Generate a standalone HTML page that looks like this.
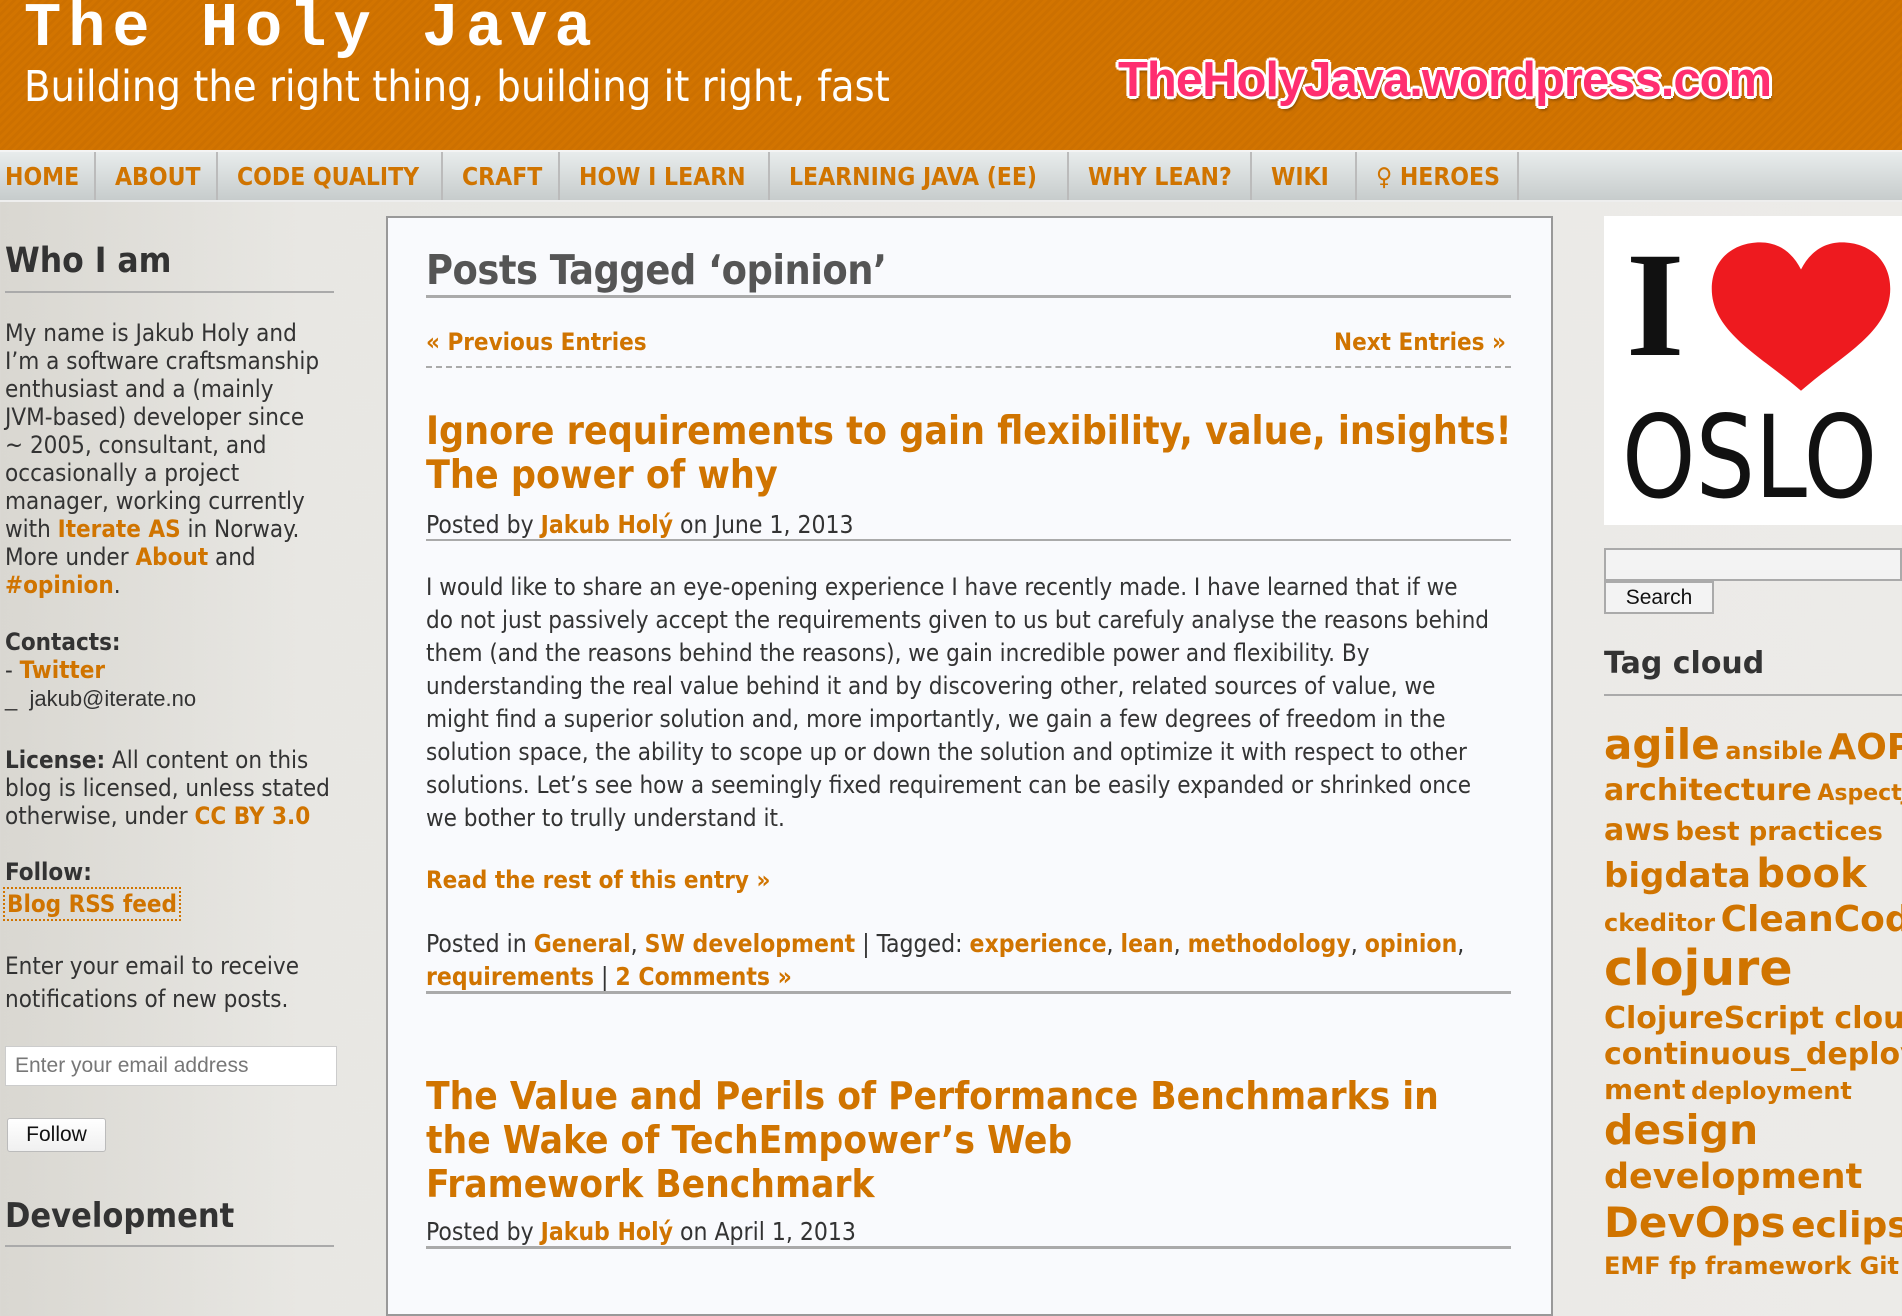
<!DOCTYPE html>
<html><head><meta charset="utf-8"><style>
*{margin:0;padding:0;box-sizing:border-box}
body{width:1902px;height:1270px;overflow:hidden;position:relative;background:linear-gradient(90deg,#d9d7d1 0,#e8e7e3 300px,#ecebe8 100%);font-family:"DejaVu Sans Condensed","DejaVu Sans",sans-serif;color:#333}
.a{position:absolute;white-space:nowrap}
.o{color:#d07400;font-weight:bold}
#hdr{position:absolute;left:0;top:0;width:1902px;height:150px;background:repeating-linear-gradient(135deg,#d27400 0,#d27400 3px,#cc7000 3px,#cc7000 6px)}
#nav{position:absolute;left:0;top:150px;width:1902px;height:52px;background:linear-gradient(#e8ecec,#d4d9d9 60%,#c7cccc);border-top:2px solid #f4f4f4;border-bottom:2px solid #eee}
#nav div{position:absolute;top:0;height:48px;line-height:50px;font-weight:bold;font-size:24.5px;color:#d07400;border-right:2px solid #bbb;text-align:left;padding-left:19px}
#main{position:absolute;left:386px;top:216px;width:1167px;height:1100px;background:#f9fafd;border:2px solid #999}
.t{font-size:24.5px;line-height:33px}
.hr{position:absolute;height:3px;background:#aaa}
.s{font-size:24px;line-height:28px}
</style></head><body>
<div id="hdr"></div>
<div class="a" style="left:24px;top:-6px;font-family:'Liberation Mono',monospace;font-weight:bold;font-size:62px;letter-spacing:7px;color:#fff;line-height:70px">The Holy Java</div>
<div class="a" style="left:24px;top:62px;font-size:43px;color:#fff;line-height:50px">Building the right thing, building it right, fast</div>
<div class="a" style="left:1118px;top:50px;font-family:'Liberation Sans',sans-serif;font-weight:bold;font-size:49px;letter-spacing:-1px;color:#ff2e70;line-height:60px;text-shadow:0 0 2px #fff,2px 2px 0 #fff,-2px -2px 0 #fff,2px -2px 0 #fff,-2px 2px 0 #fff,0 3px 0 #fff,0 -3px 0 #fff,3px 0 0 #fff,-3px 0 0 #fff,2px 4px 3px rgba(0,0,0,.4)">TheHolyJava.wordpress.com</div>
<div id="nav">
<div style="left:0;width:96px;padding-left:5px">HOME</div>
<div style="left:96px;width:122px">ABOUT</div>
<div style="left:218px;width:225px">CODE QUALITY</div>
<div style="left:443px;width:117px">CRAFT</div>
<div style="left:560px;width:210px">HOW I LEARN</div>
<div style="left:770px;width:299px">LEARNING JAVA (EE)</div>
<div style="left:1069px;width:183px">WHY LEAN?</div>
<div style="left:1252px;width:105px">WIKI</div>
<div style="left:1357px;width:162px">♀ HEROES</div>
</div>

<!-- left sidebar -->
<div class="a" style="left:5px;top:241px;font-size:35px;font-weight:bold;color:#333">Who I am</div>
<div class="hr" style="left:5px;top:291px;width:329px;height:2px"></div>
<div class="a s" style="left:5px;top:319px">My name is Jakub Holy and<br>I’m a software craftsmanship<br>enthusiast and a (mainly<br>JVM-based) developer since<br>~ 2005, consultant, and<br>occasionally a project<br>manager, working currently<br>with <span class="o">Iterate AS</span> in Norway.<br>More under <span class="o">About</span> and<br><span class="o">#opinion</span>.</div>
<div class="a s" style="left:5px;top:628px"><b>Contacts:</b><br>- <span class="o">Twitter</span><br><span style="font-family:'Liberation Sans',sans-serif;font-size:22px">_&nbsp; jakub@iterate.no</span></div>
<div class="a s" style="left:5px;top:746px"><b>License:</b> All content on this<br>blog is licensed, unless stated<br>otherwise, under <span class="o">CC BY 3.0</span></div>
<div class="a s" style="left:5px;top:858px"><b>Follow:</b></div>
<div class="a" style="left:3px;top:887px;font-size:24px;line-height:30px;border:2px dotted #d07400;padding:0 2px" ><span class="o">Blog RSS feed</span></div>
<div class="a" style="left:5px;top:950px;font-size:24px;line-height:33px">Enter your email to receive<br>notifications of new posts.</div>
<div class="a" style="left:5px;top:1046px;width:332px;height:40px;background:#fff;border:1px solid #ccc;font-family:'Liberation Sans',sans-serif;font-size:21px;color:#777;line-height:38px;padding-left:9px">Enter your email address</div>
<div class="a" style="left:7px;top:1118px;width:99px;height:34px;background:linear-gradient(#fff,#f0f0f0);border:1px solid #bbb;border-radius:3px;font-family:'Liberation Sans',sans-serif;font-size:21px;color:#111;line-height:32px;text-align:center">Follow</div>
<div class="a" style="left:5px;top:1196px;font-size:34px;font-weight:bold;color:#333">Development</div>
<div class="hr" style="left:5px;top:1245px;width:329px;height:2px"></div>

<!-- main -->
<div id="main"></div>
<div class="a" style="left:426px;top:245px;font-size:41px;font-weight:bold;color:#555;line-height:50px;letter-spacing:-0.5px">Posts Tagged ‘opinion’</div>
<div class="hr" style="left:426px;top:295px;width:1085px"></div>
<div class="a o" style="left:426px;top:327px;font-size:24px;line-height:30px">« Previous Entries</div>
<div class="a o" style="left:1334px;top:327px;font-size:24px;line-height:30px">Next Entries »</div>
<div class="a" style="left:426px;top:366px;width:1085px;border-top:2px dashed #aaa"></div>
<div class="a o" style="left:426px;top:410px;font-size:39px;line-height:44px">Ignore requirements to gain flexibility, value, insights!<br>The power of why</div>
<div class="a t" style="left:426px;top:508px">Posted by <span class="o">Jakub Holý</span> on June 1, 2013</div>
<div class="hr" style="left:426px;top:539px;width:1085px;height:2px"></div>
<div class="a" style="left:426px;top:571px;font-size:24px;line-height:33px">I would like to share an eye-opening experience I have recently made. I have learned that if we<br>do not just passively accept the requirements given to us but carefuly analyse the reasons behind<br>them (and the reasons behind the reasons), we gain incredible power and flexibility. By<br>understanding the real value behind it and by discovering other, related sources of value, we<br>might find a superior solution and, more importantly, we gain a few degrees of freedom in the<br>solution space, the ability to scope up or down the solution and optimize it with respect to other<br>solutions. Let’s see how a seemingly fixed requirement can be easily expanded or shrinked once<br>we bother to trully understand it.</div>
<div class="a o" style="left:426px;top:864px;font-size:24px;line-height:33px">Read the rest of this entry »</div>
<div class="a t" style="left:426px;top:927px">Posted in <span class="o">General</span>, <span class="o">SW development</span> | Tagged: <span class="o">experience</span>, <span class="o">lean</span>, <span class="o">methodology</span>, <span class="o">opinion</span>,<br><span class="o">requirements</span> | <span class="o">2 Comments »</span></div>
<div class="hr" style="left:426px;top:991px;width:1085px"></div>
<div class="a o" style="left:426px;top:1075px;font-size:38.5px;line-height:44px">The Value and Perils of Performance Benchmarks in<br>the Wake of TechEmpower’s Web<br>Framework Benchmark</div>
<div class="a t" style="left:426px;top:1215px">Posted by <span class="o">Jakub Holý</span> on April 1, 2013</div>
<div class="hr" style="left:426px;top:1246px;width:1085px"></div>

<!-- right sidebar -->
<div class="a" style="left:1604px;top:216px;width:298px;height:309px;background:#fff;overflow:hidden">
<div class="a" style="left:22px;top:14px;font-family:'Liberation Serif',serif;font-weight:bold;font-size:150px;line-height:150px;color:#111">I</div>
<svg class="a" style="left:100px;top:22px" width="194" height="160" viewBox="0 0 200 160"><path d="M100 155 C60 120 8 95 8 50 C8 20 30 2 58 2 C78 2 92 14 100 30 C108 14 122 2 142 2 C170 2 192 20 192 50 C192 95 140 120 100 155Z" fill="#ee1a1f"/></svg>
<div class="a" style="left:18px;top:182px;font-family:'DejaVu Sans',sans-serif;font-size:114px;line-height:120px;color:#111;transform:scaleX(0.82);transform-origin:0 0">OSLO</div>
</div>
<div class="a" style="left:1604px;top:548px;width:298px;height:33px;background:#f3f3f3;border:2px solid #aaa"></div>
<div class="a" style="left:1604px;top:581px;width:110px;height:33px;background:#f3f3f3;border:2px solid #aaa;font-family:'Liberation Sans',sans-serif;font-size:21px;line-height:29px;text-align:center;color:#111">Search</div>
<div class="a" style="left:1604px;top:646px;font-family:'DejaVu Sans',sans-serif;font-size:30px;font-weight:bold;color:#333">Tag cloud</div>
<div class="hr" style="left:1604px;top:694px;width:298px;height:2px"></div>
<div class="a" style="left:1604px;top:724px;font-family:'DejaVu Sans',sans-serif;font-weight:bold;color:#d07400;line-height:1">
<div style="position:absolute;top:0;white-space:nowrap"><span style="font-size:42px">agile</span> <span style="font-size:24px">ansible</span> <span style="font-size:36px">AOP</span></div>
<div style="position:absolute;top:52px;white-space:nowrap"><span style="font-size:30px">architecture</span> <span style="font-size:22px">AspectJ</span></div>
<div style="position:absolute;top:92px;white-space:nowrap"><span style="font-size:30px">aws</span> <span style="font-size:26px">best practices</span></div>
<div style="position:absolute;top:130px;white-space:nowrap"><span style="font-size:34px">bigdata</span> <span style="font-size:40px">book</span></div>
<div style="position:absolute;top:178px;white-space:nowrap"><span style="font-size:24px">ckeditor</span> <span style="font-size:36px">CleanCode</span></div>
<div style="position:absolute;top:220px;white-space:nowrap"><span style="font-size:49px">clojure</span></div>
<div style="position:absolute;top:280px;white-space:nowrap"><span style="font-size:30px">ClojureScript cloud</span></div>
<div style="position:absolute;top:316px;white-space:nowrap"><span style="font-size:30px">continuous_deploy</span></div>
<div style="position:absolute;top:352px;white-space:nowrap"><span style="font-size:28px">ment</span> <span style="font-size:24px">deployment</span></div>
<div style="position:absolute;top:386px;white-space:nowrap"><span style="font-size:41px">design</span></div>
<div style="position:absolute;top:436px;white-space:nowrap"><span style="font-size:35px">development</span></div>
<div style="position:absolute;top:478px;white-space:nowrap"><span style="font-size:42px">DevOps</span> <span style="font-size:36px">eclipse</span></div>
<div style="position:absolute;top:530px;white-space:nowrap"><span style="font-size:24px">EMF fp framework Git</span></div>
</div>
</body></html>
